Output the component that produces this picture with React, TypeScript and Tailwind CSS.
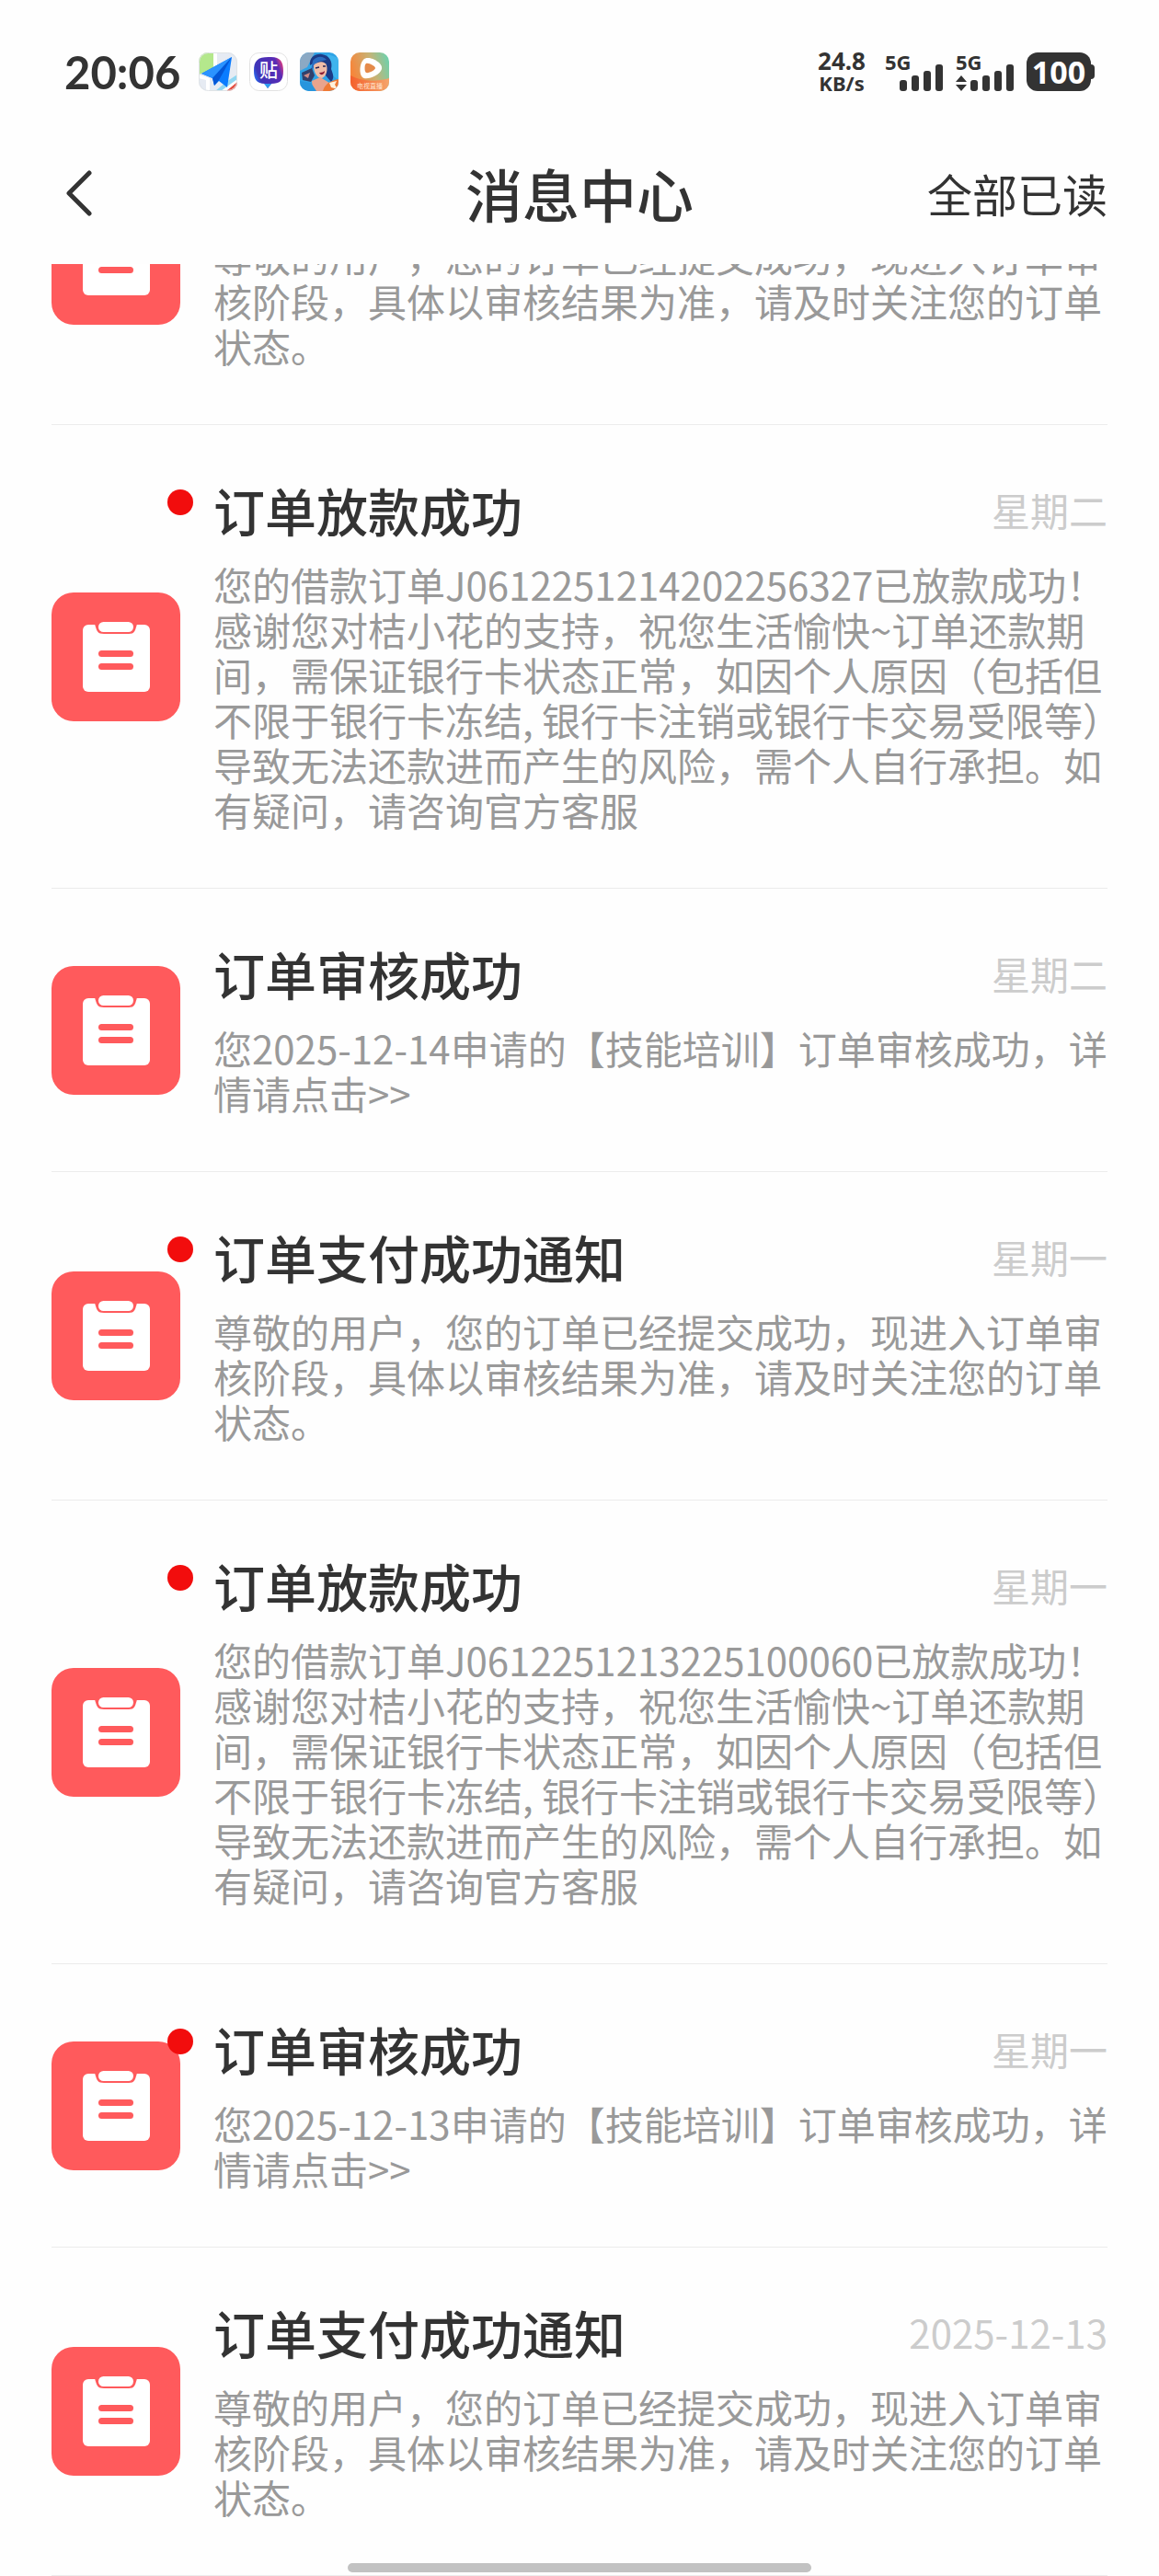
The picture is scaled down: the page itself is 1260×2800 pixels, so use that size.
import React, { useState } from 'react';

interface Message {
  id: number;
  title: string;
  body: string;
  time: string;
  unread: boolean;
}

const SUBMITTED = '尊敬的用户，您的订单已经提交成功，现进入订单审核阶段，具体以审核结果为准，请及时关注您的订单状态。';

const loanBody = (orderNo: string) =>
  `您的借款订单${orderNo}已放款成功！感谢您对桔小花的支持，祝您生活愉快~订单还款期间，需保证银行卡状态正常，如因个人原因（包括但不限于银行卡冻结, 银行卡注销或银行卡交易受限等）导致无法还款进而产生的风险，需个人自行承担。如有疑问，请咨询官方客服`;

const reviewBody = (date: string) => `您${date}申请的【技能培训】订单审核成功，详情请点击>>`;

const MESSAGES: Message[] = [
  { id: 1, title: '订单支付成功通知', body: SUBMITTED, time: '星期二', unread: false },
  { id: 2, title: '订单放款成功', body: loanBody('J0612251214202256327'), time: '星期二', unread: true },
  { id: 3, title: '订单审核成功', body: reviewBody('2025-12-14'), time: '星期二', unread: false },
  { id: 4, title: '订单支付成功通知', body: SUBMITTED, time: '星期一', unread: true },
  { id: 5, title: '订单放款成功', body: loanBody('J0612251213225100060'), time: '星期一', unread: true },
  { id: 6, title: '订单审核成功', body: reviewBody('2025-12-13'), time: '星期一', unread: true },
  { id: 7, title: '订单支付成功通知', body: SUBMITTED, time: '2025-12-13', unread: false },
];

function MapAppIcon() {
  return (
    <svg viewBox="0 0 42 42" className="size-[42px]" aria-hidden="true">
      <defs>
        <clipPath id="map-clip"><rect width="42" height="42" rx="10" /></clipPath>
      </defs>
      <g clipPath="url(#map-clip)">
        <rect width="42" height="42" fill="#e6ebf3" />
        <path d="M0 0H16V18L0 24Z" fill="#b4e88c" />
        <path d="M16 0H20V18L16 20ZM0 24L12 28V42H8V30L0 28Z" fill="#fff" />
        <path d="M18 42L30 32L42 24V30L26 42Z" fill="#8fd6f2" />
        <path d="M24 42L42 29V34L31 42Z" fill="#fff" />
        <path d="M30 42L42 32V42Z" fill="#e4493b" />
        <path d="M36 5L3 23L15 28L17 36L22 31L31 38Z" fill="#0a7cff" />
        <path d="M36 5L3 23L15 28Z" fill="#2b93ff" />
        <path d="M36 5L15 28L17 36L22 30Z" fill="#0457d6" />
      </g>
      <rect x="0.5" y="0.5" width="41" height="41" rx="10" fill="none" stroke="#dfe3e6" />
    </svg>
  );
}

function StickerAppIcon() {
  return (
    <svg viewBox="0 0 42 42" className="size-[42px]" aria-hidden="true">
      <defs>
        <linearGradient id="sticker" x1="0" y1="0.6" x2="1" y2="0.2">
          <stop offset="0" stopColor="#2b6cf0" />
          <stop offset="0.15" stopColor="#3d35b8" />
          <stop offset="0.8" stopColor="#5a2bb5" />
          <stop offset="1" stopColor="#f0407a" />
        </linearGradient>
      </defs>
      <rect x="0.5" y="0.5" width="41" height="41" rx="10" fill="#fff" stroke="#e2e2e2" />
      <path d="M21 5C33 4 37 9 37 20C37 31 33 34 24 34L20 39L17 34C8 34 5 29 5 20C5 9 9 5 21 5Z" fill="url(#sticker)" />
      <path d="M16 34L20 39L24 34Z" fill="#2f9df0" />
      <text x="21" y="27" textAnchor="middle" fontSize="20" fontWeight="500" fill="#fff" fontFamily="'Noto Sans CJK SC', sans-serif">贴</text>
    </svg>
  );
}

function GameAppIcon() {
  return (
    <svg viewBox="0 0 42 42" className="size-[42px]" aria-hidden="true">
      <defs>
        <clipPath id="game-clip"><rect width="42" height="42" rx="10" /></clipPath>
      </defs>
      <g clipPath="url(#game-clip)">
        <rect width="42" height="42" fill="#2fa3e6" />
        <path d="M0 0H16L8 16L0 20Z" fill="#8ba9c4" />
        <path d="M30 2L42 6V30L34 24Z" fill="#3fb4ee" />
        <path d="M11 14C10 5 17 1 24 2C32 3 36 10 34 18C36 24 38 27 34 32L28 25L16 11Z" fill="#1c3b86" />
        <path d="M14 9C19 3 26 4 29 8L20 10L12 20Z" fill="#2b6cc0" />
        <path d="M15 14C20 9 27 9 29 14C31 21 27 28 23 28C18 27 15 21 15 14Z" fill="#f0bda8" />
        <path d="M17 17L21 16M25 15L28 15" stroke="#2b2450" strokeWidth="1.5" />
        <path d="M21 22C24 22 26 21 27 20C27 24 23 26 21 22Z" fill="#8d2036" />
        <path d="M2 22L13 17L16 25L12 32L3 30Z" fill="#31406c" />
        <path d="M4 25L11 22L9 28Z" fill="#d08a86" />
        <path d="M13 31L22 27L32 33L30 42H14Z" fill="#e9a48d" />
        <path d="M0 31L12 33L18 42H0Z" fill="#2795dd" />
        <path d="M25 42C27 34 33 31 42 29V42Z" fill="#f07a35" />
        <path d="M32 33L40 31L38 35L41 40L34 38Z" fill="#fff2dc" />
      </g>
    </svg>
  );
}

function VideoAppIcon() {
  return (
    <svg viewBox="0 0 42 42" className="size-[42px]" aria-hidden="true">
      <defs>
        <linearGradient id="video" x1="0" y1="0.3" x2="1" y2="0">
          <stop offset="0" stopColor="#f5873c" />
          <stop offset="0.5" stopColor="#c8b274" />
          <stop offset="1" stopColor="#62d5b4" />
        </linearGradient>
        <linearGradient id="video-band" x1="0" y1="0" x2="1" y2="0">
          <stop offset="0" stopColor="#f4602c" />
          <stop offset="1" stopColor="#f5a46a" />
        </linearGradient>
        <clipPath id="video-clip"><rect width="42" height="42" rx="10" /></clipPath>
      </defs>
      <g clipPath="url(#video-clip)">
        <rect width="42" height="42" fill="url(#video)" />
        <path d="M0 25C12 32 28 32 42 28V42H0Z" fill="url(#video-band)" />
        <path d="M14 8C19 2 36 11 34 18C32 25 17 31 13 27C9 23 10 12 14 8Z" fill="#fff" />
        <path d="M17 12C20 11 27 15 27 17C27 19 20 23 17 22C15 21 15 13 17 12Z" fill="#e58a4a" />
        <text x="21" y="39" textAnchor="middle" fontSize="7" fill="#ffe3cf" fontFamily="'Noto Sans CJK SC', sans-serif">电视直播</text>
      </g>
    </svg>
  );
}

function Signal({ active = false }: { active?: boolean }) {
  return (
    <div className="flex flex-col justify-between h-[42px]">
      <span className="text-[22px] leading-5 font-bold">5G</span>
      <svg viewBox="0 0 64 30" className="-mt-2 h-[30px] w-16" fill="#333" aria-hidden="true">
        {active && <path d="M6 13L12 20H0ZM6 30L0 23H12Z" />}
        <rect x="16" y="18" width="8" height="12" rx="3" />
        <rect x="29" y="13" width="8" height="17" rx="3" />
        <rect x="42" y="8" width="8" height="22" rx="3" />
        <rect x="55" y="1" width="8" height="29" rx="3" />
      </svg>
    </div>
  );
}

function StatusBar() {
  return (
    <div className="flex h-[156px] items-center justify-between px-[70px] font-['Noto_Sans']">
      <div className="flex items-center gap-5">
        <span className="font-['Lato'] text-[49px] leading-none font-bold">20:06</span>
        <div className="flex gap-[13px]">
          <MapAppIcon />
          <StickerAppIcon />
          <GameAppIcon />
          <VideoAppIcon />
        </div>
      </div>
      <div className="flex items-center gap-[13px]">
        <div className="mr-2 flex flex-col items-center font-bold">
          <span className="text-[26px] leading-6">24.8</span>
          <span className="text-[22px] leading-6">KB/s</span>
        </div>
        <Signal />
        <Signal active />
        <div className="flex items-center">
          <span className="flex h-[42px] w-[70px] items-center justify-center rounded-[12px] bg-[#333] text-[34px] font-bold text-white">100</span>
          <span className="h-4 w-1 rounded-r-[4px] bg-[#333]" />
        </div>
      </div>
    </div>
  );
}

function ClipboardIcon() {
  return (
    <svg viewBox="0 0 140 140" className="size-[140px] shrink-0" aria-hidden="true">
      <rect width="140" height="140" rx="24" fill="#ff5a5c" />
      <rect x="34" y="35" width="73" height="73" rx="6" fill="#fff" />
      <path d="M47 34H93C91 42 90 45 84 45H57C50 45 49 42 47 34Z" fill="#ff5a5c" />
      <rect x="51" y="32" width="38" height="11" rx="5.5" fill="#fff" />
      <rect x="51" y="63" width="38" height="7" rx="3.5" fill="#ff5a5c" />
      <rect x="51" y="77" width="38" height="7" rx="3.5" fill="#ff5a5c" />
    </svg>
  );
}

function MessageRow({ message }: { message: Message }) {
  return (
    <li className="relative flex items-center gap-9 border-b border-[#ececec] py-14">
      <ClipboardIcon />
      {message.unread && <span className="absolute top-[70px] left-[126px] size-7 rounded-full bg-[#f20d0d]" />}
      <div className="min-w-0 flex-1 pb-[5px]">
        <div className="mb-5 flex items-center justify-between">
          <h2 className="text-[56px] leading-[72px] font-medium">{message.title}</h2>
          <time className="text-[42px] leading-[72px] text-[#ccc]">{message.time}</time>
        </div>
        <p className="text-[42px] leading-[49px] text-[#999]">{message.body}</p>
      </div>
    </li>
  );
}

export default function App() {
  const [messages, setMessages] = useState(MESSAGES);

  const markAllRead = () => {
    setMessages(prev => prev.map(m => ({ ...m, unread: false })));
  };

  return (
    <div lang="zh-CN" className="relative min-h-screen overflow-hidden bg-[#fefefe] font-['Noto_Sans_CJK_SC',sans-serif] text-[#333]">
      <header className="relative z-10 bg-[#fefefe] pb-[23px]">
        <StatusBar />
        <div className="grid h-[108px] grid-cols-3 items-center px-14">
          <button aria-label="返回" className="justify-self-start pl-4">
            <svg viewBox="0 0 28 50" className="h-[50px] w-7" fill="none" stroke="#333" strokeWidth="5" strokeLinecap="round" strokeLinejoin="round" aria-hidden="true">
              <path d="M25 3L3 25L25 47" />
            </svg>
          </button>
          <h1 className="text-center text-[62px] leading-[72px] font-medium">消息中心</h1>
          <button onClick={markAllRead} className="justify-self-end text-[49px] leading-[72px]">全部已读</button>
        </div>
      </header>

      <main className="px-14">
        <ul className="-mt-[182px]">
          {messages.map(m => <MessageRow key={m.id} message={m} />)}
        </ul>
      </main>

      <div className="absolute bottom-1 left-1/2 h-[10px] w-2/5 -translate-x-1/2 rounded-full bg-[#c2c2c2]" />
    </div>
  );
}
